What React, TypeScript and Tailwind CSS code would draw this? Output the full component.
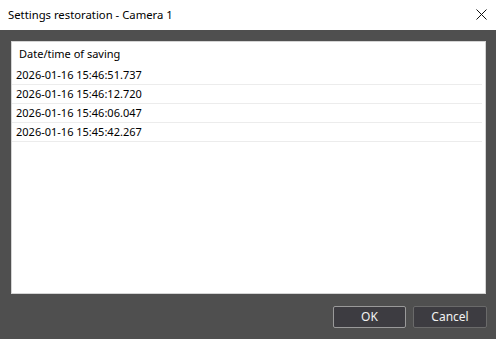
const rows = [
  '2026-01-16 15:46:51.737',
  '2026-01-16 15:46:12.720',
  '2026-01-16 15:46:06.047',
  '2026-01-16 15:45:42.267',
];

export default function App() {
  return (
    <div
      className="w-[496px] h-[339px] flex flex-col bg-[#4f4f4f] overflow-hidden"
      style={{ fontFamily: '"Noto Sans", "Open Sans", sans-serif' }}
    >
      {/* title bar */}
      <div className="h-[30px] bg-white flex items-center justify-between pl-[8px] pr-[9px] shrink-0">
        <span className="text-[11.3px] text-black">Settings restoration - Camera 1</span>
        <svg width="11" height="11" viewBox="0 0 11 11" className="mt-[-2px]">
          <path d="M0.5 0.5 L10.5 10.5 M10.5 0.5 L0.5 10.5" stroke="#111" strokeWidth="1" />
        </svg>
      </div>

      {/* list */}
      <div className="mt-[11px] ml-[11px] mr-[10px] h-[253px] bg-white border border-[#d4d4d4] flex flex-col">
        <div className="h-[24px] flex items-center pl-[7px] text-[11px] text-black">
          Date/time of saving
        </div>
        {rows.map((r) => (
          <div
            key={r}
            className="h-[19px] flex items-center pl-[4px] text-[11px] text-black border-b border-[#ececec] mr-[3px]"
          >
            {r}
          </div>
        ))}
      </div>

      {/* buttons */}
      <div className="flex justify-end gap-[7px] pr-[9px] mt-[12px]">
        <button className="w-[73px] h-[22px] bg-[#3d3c41] border border-[#9a9a9a] rounded-[2px] text-[12px] text-[#f2f2f2]">
          OK
        </button>
        <button className="w-[74px] h-[22px] bg-[#3d3c41] border border-[#6a6a6a] rounded-[2px] text-[12px] text-[#f2f2f2]">
          Cancel
        </button>
      </div>
    </div>
  );
}
